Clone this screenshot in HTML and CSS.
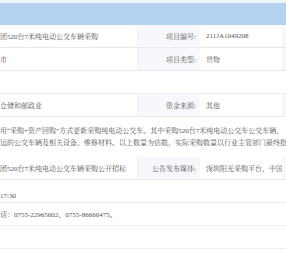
FILE: index.html
```html
<!DOCTYPE html>
<html lang="zh-CN">
<head>
<meta charset="utf-8">
<link rel="stylesheet" href="styles.css">
</head>
<body>
<div class="page">
  <div class="band"></div>
  <div class="row">
    <div class="cell v1">团520台7米纯电动公交车辆采购</div>
    <div class="cell lab">项目编号:</div>
    <div class="cell v2">211JA1049208</div>
    <div class="cell lab2"></div>
  </div>
  <div class="row">
    <div class="cell v1">市</div>
    <div class="cell lab">项目类型:</div>
    <div class="cell v2">货物</div>
    <div class="cell lab2"></div>
  </div>
  <div class="row blank"></div>
  <div class="row">
    <div class="cell v1">仓储和邮政业</div>
    <div class="cell lab">资金来源:</div>
    <div class="cell v2">其他</div>
    <div class="cell lab2"></div>
  </div>
  <div class="para">
    <p>用“采购+资产回购”方式更新采购纯电动公交车。其中采购520台7米纯电动公交车公交车辆，</p>
    <p>运的公交车辆及相关设备、维修材料。以上数量为估数，实际采购数量以行业主管部门最终批</p>
  </div>
  <div class="row">
    <div class="cell v1">团520台7米纯电动公交车辆采购公开招标</div>
    <div class="cell lab">公告发布媒体:</div>
    <div class="cell v2">深圳阳光采购平台，中国</div>
    <div class="cell lab2"></div>
  </div>
  <div class="line time">17:30</div>
  <div class="line">话：0755-22965602、0755-86660475。</div>
  <div class="line"></div>
  <div class="line"></div>
</div>
</body>
</html>
```

FILE: styles.css
```css
html, body {
  margin: 0;
  padding: 0;
  background: #ffffff;
}
.page {
  font-family: "Liberation Serif", "Noto Serif CJK SC", "Noto Sans CJK SC", serif;
  font-size: 7px;
  color: #555;
  width: 286px;
  overflow: hidden;
}
.band {
  height: 22px;
  border-top: 3px solid #edf3fa;
  background: #b5d2f1;
}
.row {
  display: flex;
  height: 22px;
  border-bottom: 1px solid #e8eaee;
}
.row.blank {
  border-bottom: 1px solid #eef0f3;
}
.cell {
  display: flex;
  align-items: center;
  white-space: nowrap;
  overflow: hidden;
}
.v1 {
  width: 138px;
  border-right: 1px solid #eef0f4;
  box-sizing: border-box;
}
.lab {
  width: 62px;
  justify-content: flex-end;
  padding-right: 4px;
  box-sizing: border-box;
  background: #f7f8fb;
}
.v2 {
  width: 82px;
  padding-left: 6px;
  box-sizing: border-box;
}
.lab2 {
  flex: 1;
  background: #f7f8fb;
}
.para {
  height: 40px;
  padding-top: 8px;
  box-sizing: border-box;
}
.para p {
  margin: 0;
  line-height: 12px;
  white-space: nowrap;
}
.line {
  height: 22px;
  border-bottom: 1px solid #eceef1;
  display: flex;
  align-items: center;
  white-space: nowrap;
}
.line.time {
  align-items: flex-end;
  padding-bottom: 2px;
  height: 20px;
}
```
